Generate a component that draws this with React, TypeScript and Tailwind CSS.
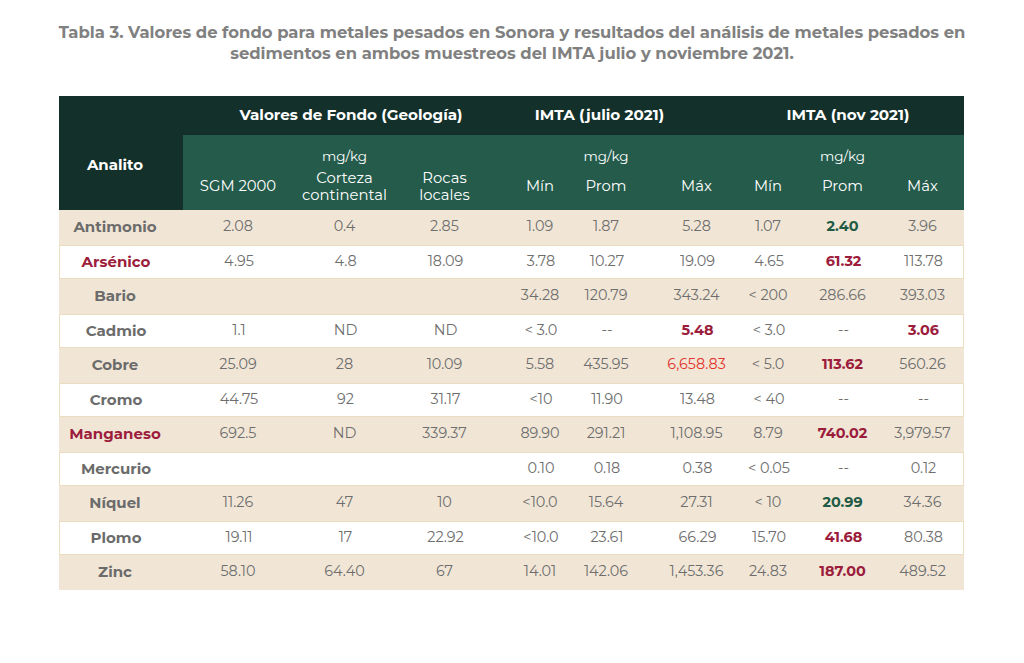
import React from "react";

type Cell = { v: string; c?: "r" | "g" | "bright" };
type Row = { name: string; nameColor?: "r"; cells: (string | Cell)[] };

const rows: Row[] = [
  { name: "Antimonio", cells: ["2.08", "0.4", "2.85", "1.09", "1.87", "5.28", "1.07", { v: "2.40", c: "g" }, "3.96"] },
  { name: "Arsénico", nameColor: "r", cells: ["4.95", "4.8", "18.09", "3.78", "10.27", "19.09", "4.65", { v: "61.32", c: "r" }, "113.78"] },
  { name: "Bario", cells: ["", "", "", "34.28", "120.79", "343.24", "< 200", "286.66", "393.03"] },
  { name: "Cadmio", cells: ["1.1", "ND", "ND", "< 3.0", "--", { v: "5.48", c: "r" }, "< 3.0", "--", { v: "3.06", c: "r" }] },
  { name: "Cobre", cells: ["25.09", "28", "10.09", "5.58", "435.95", { v: "6,658.83", c: "bright" }, "< 5.0", { v: "113.62", c: "r" }, "560.26"] },
  { name: "Cromo", cells: ["44.75", "92", "31.17", "<10", "11.90", "13.48", "< 40", "--", "--"] },
  { name: "Manganeso", nameColor: "r", cells: ["692.5", "ND", "339.37", "89.90", "291.21", "1,108.95", "8.79", { v: "740.02", c: "r" }, "3,979.57"] },
  { name: "Mercurio", cells: ["", "", "", "0.10", "0.18", "0.38", "< 0.05", "--", "0.12"] },
  { name: "Níquel", cells: ["11.26", "47", "10", "<10.0", "15.64", "27.31", "< 10", { v: "20.99", c: "g" }, "34.36"] },
  { name: "Plomo", cells: ["19.11", "17", "22.92", "<10.0", "23.61", "66.29", "15.70", { v: "41.68", c: "r" }, "80.38"] },
  { name: "Zinc", cells: ["58.10", "64.40", "67", "14.01", "142.06", "1,453.36", "24.83", { v: "187.00", c: "r" }, "489.52"] },
];

const colShift = ["", "", "", "pl-[14px]", "pr-[12px]", "pl-[10px]", "", "", ""];

export default function App() {
  const font = { fontFamily: "Montserrat, 'Open Sans', 'Liberation Sans', sans-serif" };
  return (
    <div className="w-[1024px] h-[663px] bg-white" style={font}>
      <div className="pt-[22px] text-center text-[16.4px] leading-[21px] font-bold text-[#808080]">
        <div>Tabla 3. Valores de fondo para metales pesados en Sonora y resultados del análisis de metales pesados en</div>
        <div>sedimentos en ambos muestreos del IMTA julio y noviembre 2021.</div>
      </div>
      <div className="ml-[59px] mt-[32px] w-[905px]">
        <div className="grid grid-cols-[124px_110px_103px_97px_80px_78px_81px_72px_77px_83px] grid-rows-[39px_36px_39px] text-white">
          <div className="row-span-3 bg-[#13302a] flex items-center justify-center pt-[24px] pr-[12px] font-bold text-[15px]">Analito</div>
          <div className="col-span-3 bg-[#13302a] flex items-center justify-center pl-[26px] font-bold text-[15.2px]">Valores de Fondo (Geología)</div>
          <div className="col-span-3 bg-[#13302a] flex items-center justify-center pr-[26px] font-bold text-[15.2px]">IMTA (julio 2021)</div>
          <div className="col-span-3 bg-[#13302a] flex items-center justify-center font-bold text-[15.2px]">IMTA (nov 2021)</div>
          {[0, 1, 2, 3, 4, 5, 6, 7, 8].map((i) => (
            <div key={i} className={`bg-[#245b4b] flex items-center justify-center pt-[6px] text-[13.5px] ${colShift[i]}`}>
              {i === 1 || i === 4 || i === 7 ? "mg/kg" : ""}
            </div>
          ))}
          {["SGM 2000", "Corteza continental", "Rocas locales", "Mín", "Prom", "Máx", "Mín", "Prom", "Máx"].map((l, i) => (
            <div key={i} className={`bg-[#245b4b] flex items-center justify-center pb-[8px] text-center text-[14.8px] leading-[17px] ${colShift[i]}`}>
              {l === "Corteza continental" ? (
                <span>Corteza<br />continental</span>
              ) : l === "Rocas locales" ? (
                <span>Rocas<br />locales</span>
              ) : (
                l
              )}
            </div>
          ))}
        </div>
        {rows.map((r, ri) => (
          <div
            key={r.name}
            className={`grid grid-cols-[124px_110px_103px_97px_80px_78px_81px_72px_77px_83px] h-[34.5px] items-center text-[14.4px] text-[#6e6e6e] ${
              ri % 2 === 0 ? "bg-[#f1e6d6]" : "bg-white border border-[#ecdcc0]"
            }`}
          >
            <div className={`text-center pr-[12px] font-bold text-[15px] ${r.nameColor === "r" ? "text-[#9c1c3c]" : "text-[#6b6b6b]"}`}>{r.name}</div>
            {r.cells.map((c, ci) => {
              const cell: Cell = typeof c === "string" ? { v: c } : c;
              const cls =
                cell.c === "r"
                  ? "font-bold text-[#9c1c3c]"
                  : cell.c === "g"
                  ? "font-bold text-[#1f5b45]"
                  : cell.c === "bright"
                  ? "text-[#e3342b]"
                  : "";
              return (
                <div key={ci} className={`text-center ${colShift[ci]} ${cls}`}>
                  {cell.v}
                </div>
              );
            })}
          </div>
        ))}
      </div>
    </div>
  );
}
